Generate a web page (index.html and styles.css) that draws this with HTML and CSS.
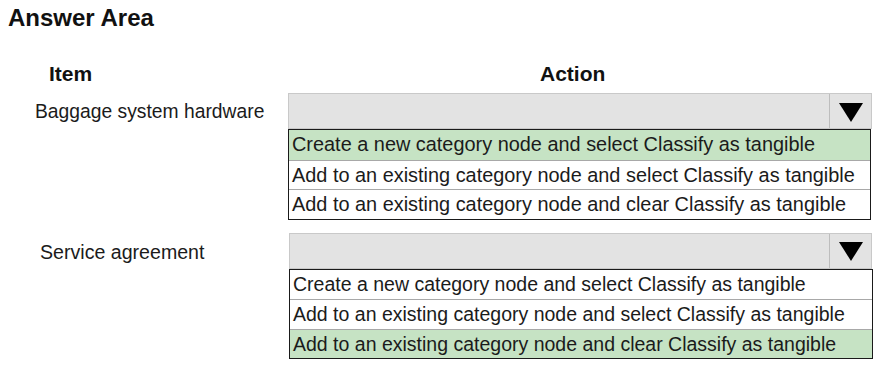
FILE: index.html
```html
<!DOCTYPE html>
<html>
<head>
<meta charset="utf-8">
<link rel="stylesheet" href="styles.css">
</head>
<body>
<div class="page">
  <h1 class="title">Answer Area</h1>
  <div class="grid">
    <div class="head head-item">Item</div>
    <div class="head head-action">Action</div>

    <div class="label label-1">Baggage system hardware</div>
    <div class="dd dd-1">
      <div class="box"><div class="box-fill"></div><div class="box-arrow"><span class="tri"></span></div></div>
      <div class="list">
        <div class="opt sel">Create a new category node and select Classify as tangible</div>
        <div class="opt">Add to an existing category node and select Classify as tangible</div>
        <div class="opt">Add to an existing category node and clear Classify as tangible</div>
      </div>
    </div>

    <div class="label label-2">Service agreement</div>
    <div class="dd dd-2">
      <div class="box"><div class="box-fill"></div><div class="box-arrow"><span class="tri"></span></div></div>
      <div class="list">
        <div class="opt">Create a new category node and select Classify as tangible</div>
        <div class="opt">Add to an existing category node and select Classify as tangible</div>
        <div class="opt sel">Add to an existing category node and clear Classify as tangible</div>
      </div>
    </div>
  </div>
</div>
</body>
</html>
```

FILE: styles.css
```css
html, body {
  margin: 0;
  padding: 0;
  background: #ffffff;
}
.page {
  width: 881px;
  height: 367px;
  font-family: "Liberation Sans", Arial, sans-serif;
  color: #1b1b1b;
  padding: 4px 0 0 8px;
  box-sizing: border-box;
}
.title {
  margin: 0;
  font-size: 24px;
  font-weight: bold;
  line-height: 28px;
  color: #111;
}
.grid {
  display: grid;
  grid-template-columns: 280px 584px;
  margin-top: 29px;
}
.head {
  font-size: 21px;
  font-weight: bold;
  line-height: 26px;
  color: #111;
  height: 32px;
}
.head-item {
  padding-left: 41px;
}
.head-action {
  padding-left: 252px;
}
.label {
  font-size: 19.3px;
  line-height: 38px;
  height: 36px;
}
.label-1 {
  padding-left: 27px;
}
.label-2 {
  padding-left: 32px;
  font-size: 19.6px;
  margin-top: 13px;
}
.dd-2 {
  margin-top: 13px;
  margin-left: 1px;
}
.box {
  display: flex;
  height: 36px;
  box-sizing: border-box;
  border: 1px solid #c9c9c9;
  background: #e3e3e3;
}
.box-fill {
  flex: 1;
}
.box-arrow {
  width: 41px;
  border-left: 1px solid #bdbdbd;
  display: flex;
  align-items: center;
  justify-content: center;
}
.tri {
  width: 0;
  height: 0;
  border-left: 12.5px solid transparent;
  border-right: 12.5px solid transparent;
  border-top: 19px solid #000;
  margin-top: 2px;
}
.list {
  border: 1.5px solid #1a1a1a;
  border-top-width: 1px;
  width: 583px;
  box-sizing: border-box;
}
.opt {
  height: 29.5px;
  line-height: 29px;
  font-size: 19.9px;
  padding-left: 3px;
  box-sizing: border-box;
  white-space: nowrap;
  border-top: 1px solid #a8a8a8;
  background: #ffffff;
}
.opt:first-child {
  border-top: none;
}
.opt.sel {
  background: #c6e3c4;
}
.dd-2 .list {
  width: 584px;
}
.dd-2 .opt {
  font-size: 19.5px;
  padding-left: 3px;
}
```
